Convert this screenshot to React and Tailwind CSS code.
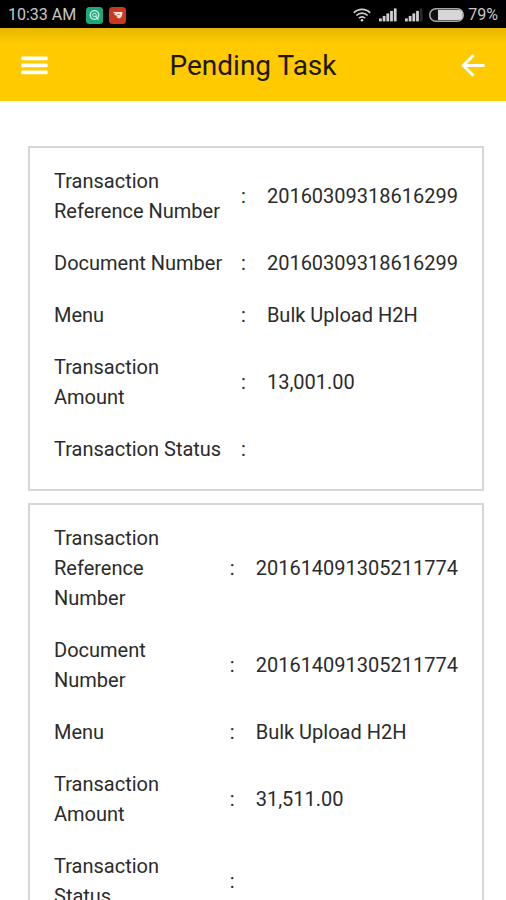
import React from 'react';

const tasks = [
  {
    id: 1,
    valueWidth: 'w-[188px]',
    rows: [
      ['Transaction Reference Number', '20160309318616299'],
      ['Document Number', '20160309318616299'],
      ['Menu', 'Bulk Upload H2H'],
      ['Transaction Amount', '13,001.00'],
      ['Transaction Status', ''],
    ],
  },
  {
    id: 2,
    valueWidth: 'w-[199px]',
    rows: [
      ['Transaction Reference Number', '201614091305211774'],
      ['Document Number', '201614091305211774'],
      ['Menu', 'Bulk Upload H2H'],
      ['Transaction Amount', '31,511.00'],
      ['Transaction Status', ''],
    ],
  },
];

function SignalIcon({ className, bars = 5 }) {
  return (
    <svg viewBox="0 0 18 14" className={className} aria-hidden="true">
      {[0, 1, 2, 3, 4].map((i) => (
        <rect
          key={i}
          x={i * 3.7}
          y={10.4 - i * 2.5}
          width="2.8"
          height={3 + i * 2.5}
          fill={i < bars ? '#d0d0d0' : '#2a2a2a'}
        />
      ))}
    </svg>
  );
}

function StatusBar() {
  return (
    <div className="h-7 shrink-0 bg-black text-[#c8c8c8] text-base flex items-center justify-between px-2 pt-0.5">
      <div className="flex items-center gap-2.5">
        <span>10:33 AM</span>
        <div className="flex items-center gap-1.5">
          <svg viewBox="0 0 17 17" className="size-[17px]" aria-hidden="true">
            <rect width="17" height="17" rx="3.5" fill="#1fa877" />
            <circle cx="8.5" cy="8" r="4.3" fill="none" stroke="#d5f3e8" strokeWidth="1.3" />
            <circle cx="8.5" cy="8" r="1.8" fill="none" stroke="#d5f3e8" strokeWidth="1" />
            <path d="M9.5 9l3 3.6" stroke="#d5f3e8" strokeWidth="1.2" />
          </svg>
          <svg viewBox="0 0 17 17" className="size-[17px]" aria-hidden="true">
            <rect width="17" height="17" rx="3.5" fill="#c73a22" />
            <path d="M3.8 5h9.600c.2 3.400-.8 6-3.400 6.600L7.200 9.900l1.600-.7L4.800 7.600l1.400-.5z" fill="#fbe3dc" />
            <path d="M8 7.400h3" stroke="#c73a22" strokeWidth=".7" />
          </svg>
        </div>
      </div>

      <div className="flex items-center">
        <svg viewBox="0 0 18 14" className="w-[18px] h-3.5" fill="none" stroke="#d0d0d0" strokeWidth="1.7" aria-hidden="true">
          <path d="M.8 4.800a11.500 11.500 0 0 1 16.400 0" />
          <path d="M3.400 7.500a7.900 7.900 0 0 1 11.200 0" />
          <path d="M6 10.100a4.200 4.200 0 0 1 6 0" />
          <circle cx="9" cy="12.200" r="1.300" fill="#d0d0d0" stroke="none" />
        </svg>
        <SignalIcon className="w-[18px] h-3.5 ml-2" />
        <SignalIcon className="w-[18px] h-3.5 ml-2" bars={4} />
        <svg viewBox="0 0 35 14" className="w-[35px] h-3.5 ml-1.5 mr-1" aria-hidden="true">
          <rect x=".8" y=".8" width="33.400" height="12.400" rx="6" fill="#111" stroke="#a8a8a8" strokeWidth="1.600" />
          <path d="M9 2h20.500a4 4 0 0 1 4 4v2a4 4 0 0 1-4 4H9z" fill="#d6d6d6" />
        </svg>
        <span>79%</span>
      </div>
    </div>
  );
}

function Header() {
  return (
    <header className="relative h-[73px] shrink-0 bg-[#ffcb00] flex items-center justify-between px-5 pt-0.5">
      {/* Shade cast by the status bar */}
      <div className="absolute inset-x-0 top-0 h-4 bg-linear-to-b from-black/10 to-transparent" />
      <button type="button" aria-label="Open menu" className="w-7">
        <svg viewBox="0 0 28 20" className="w-7 h-5" fill="white">
          <rect x="1.400" y=".6" width="26.200" height="3.600" rx="1" />
          <rect x="1.400" y="7.600" width="26.200" height="3.600" rx="1" />
          <rect x="1.400" y="14.600" width="26.200" height="3.600" rx="1" />
        </svg>
      </button>
      <h1 className="text-[28px] leading-9 text-[#1c1800]">Pending Task</h1>
      <button type="button" aria-label="Go back" className="w-7">
        <svg viewBox="0 0 28 24" className="w-7 h-6" fill="none" stroke="white" strokeWidth="3">
          <path d="M15.600 1.200L5.300 11.500l10.300 10.300M5.300 11.500H26.500" />
        </svg>
      </button>
    </header>
  );
}

function TaskCard({ task }) {
  return (
    <section className="border-2 border-[#d6d6d6] px-6 pt-[7px] pb-3.5">
      <table className="w-full text-left text-[20px] leading-[30px] text-[#2b2b2b]">
        <tbody>
          {task.rows.map(([label, value]) => (
            <tr key={label}>
              <th scope="row" className="font-normal py-[11px] pr-4">{label}</th>
              <td className="w-[26px]">:</td>
              <td className={`${task.valueWidth} whitespace-nowrap`}>{value}</td>
            </tr>
          ))}
        </tbody>
      </table>
    </section>
  );
}

export default function App() {
  return (
    <div className="h-screen flex flex-col bg-white font-['Roboto',sans-serif]">
      <StatusBar />
      <Header />
      <main className="flex-1 overflow-y-auto pt-[45px] pb-6 pl-7 pr-[22px] space-y-3">
        {tasks.map((task) => (
          <TaskCard key={task.id} task={task} />
        ))}
      </main>
    </div>
  );
}
